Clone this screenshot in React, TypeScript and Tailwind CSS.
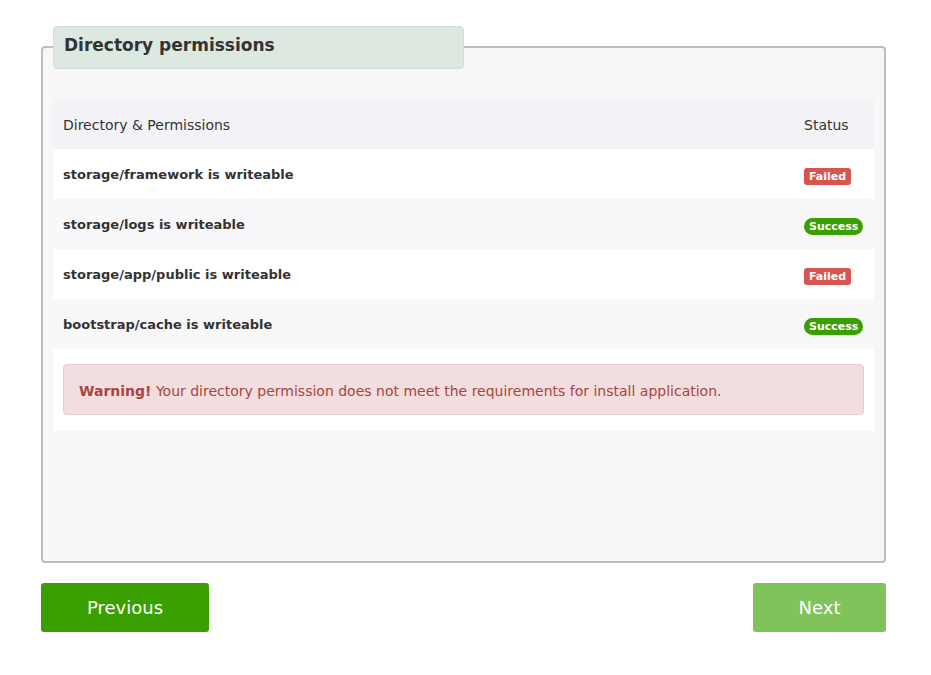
import { ReactNode } from "react";

type Row = { path: string; ok: boolean };

const rows: Row[] = [
  { path: "storage/framework", ok: false },
  { path: "storage/logs", ok: true },
  { path: "storage/app/public", ok: false },
  { path: "bootstrap/cache", ok: true },
];

function Badge({ ok }: { ok: boolean }) {
  if (ok) {
    return (
      <span className="inline-block rounded-full bg-[#3a9f00] px-[5px] text-[11px] font-bold leading-[17px] text-white">
        Success
      </span>
    );
  }
  return (
    <span className="inline-block rounded-[3px] bg-[#d9534f] px-[5px] text-[11px] font-bold leading-[17px] text-white">
      Failed
    </span>
  );
}

function Cell({ children, className = "" }: { children: ReactNode; className?: string }) {
  return <td className={`h-[50px] px-[10px] pt-[2px] align-middle ${className}`}>{children}</td>;
}

export default function App() {
  return (
    <div className="min-h-screen bg-white pl-[41px] pr-[45px] pt-[46px] font-['DejaVu_Sans',sans-serif] text-[#333]">
      {/* Panel */}
      <div className="h-[517px] rounded-[4px] border-2 border-[#b9bdc6] bg-[#f7f7f7] px-[10px]">
        <div className="-mt-[22px] h-[43px] w-[411px] rounded-[4px] border border-[#d3ded6] bg-[#dde8e0] px-[10px] pt-[6px] text-[17px] font-bold">
          Directory permissions
        </div>

        <div className="mt-[30px] bg-white">
          <table className="w-full border-collapse text-[14px]">
            <thead>
              <tr className="bg-[#f3f3f7]">
                <Cell className="pt-0 text-left font-normal">Directory &amp; Permissions</Cell>
                <Cell className="w-[80px] pt-0 text-left font-normal">Status</Cell>
              </tr>
            </thead>
            <tbody>
              {rows.map((r, i) => (
                <tr key={r.path} className={i % 2 === 1 ? "bg-[#f8f8fa]" : "bg-white"}>
                  <Cell className="text-[13px] font-bold">{r.path} is writeable</Cell>
                  <Cell className="pt-0">
                    <Badge ok={r.ok} />
                  </Cell>
                </tr>
              ))}
            </tbody>
          </table>

          <div className="px-[10px] pb-[16px] pt-[15px]">
            <div className="rounded-[4px] border border-[#ebccd1] bg-[#f2dede] px-[15px] pb-[13px] pt-[17px] text-[14px] leading-[19px] text-[#a94442]">
              <b>Warning!</b> Your directory permission does not meet the requirements for install application.
            </div>
          </div>
        </div>
      </div>

      {/* Actions */}
      <div className="mt-[20px] flex justify-between">
        <button className="h-[49px] w-[168px] rounded-[3px] bg-[#3a9f00] text-[18px] font-medium text-white">
          Previous
        </button>
        <button className="h-[49px] w-[133px] rounded-[3px] bg-[#7fc35a] text-[18px] font-medium text-white">
          Next
        </button>
      </div>
    </div>
  );
}
